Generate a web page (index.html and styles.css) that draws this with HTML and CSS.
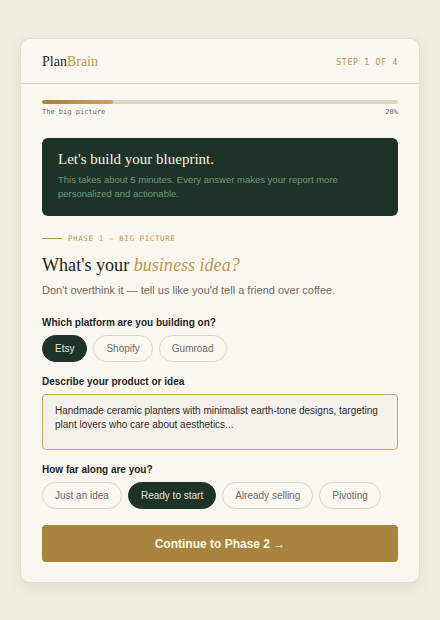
FILE: index.html
```html
<!DOCTYPE html>
<html lang="en">
<head>
<meta charset="utf-8">
<link rel="stylesheet" href="styles.css">
</head>
<body>
<div class="card">
  <header class="card-header">
    <div class="logo"><span class="logo-plan">Plan</span><span class="logo-brain">Brain</span></div>
    <div class="step">STEP 1 OF 4</div>
  </header>
  <div class="card-body">
    <div class="progress">
      <div class="track"><div class="fill" style="width:20%"></div></div>
      <div class="progress-labels"><span>The big picture</span><span>20%</span></div>
    </div>
    <div class="intro">
      <div class="intro-title">Let's build your blueprint.</div>
      <div class="intro-text">This takes about 5 minutes. Every answer makes your report more personalized and actionable.</div>
    </div>
    <div class="phase"><span class="phase-line"></span><span>PHASE 1 — BIG PICTURE</span></div>
    <h1 class="question">What's your <em>business idea?</em></h1>
    <p class="sub">Don't overthink it — tell us like you'd tell a friend over coffee.</p>
    <div class="field">
      <div class="label">Which platform are you building on?</div>
      <div class="pills">
        <span class="pill active">Etsy</span>
        <span class="pill">Shopify</span>
        <span class="pill">Gumroad</span>
      </div>
    </div>
    <div class="field">
      <div class="label">Describe your product or idea</div>
      <div class="textarea">Handmade ceramic planters with minimalist earth-tone designs, targeting plant lovers who care about aesthetics...</div>
    </div>
    <div class="field">
      <div class="label">How far along are you?</div>
      <div class="pills">
        <span class="pill">Just an idea</span>
        <span class="pill active">Ready to start</span>
        <span class="pill">Already selling</span>
        <span class="pill">Pivoting</span>
      </div>
    </div>
    <button class="continue">Continue to Phase 2 →</button>
  </div>
</div>
</body>
</html>
```
FILE: styles.css
```css
* { box-sizing: border-box; }
html, body { margin: 0; padding: 0; }
body {
  background: #f2ede3;
  font-family: "Liberation Sans", Arial, sans-serif;
  padding: 38px 20px;
  min-height: 620px;
}
.card {
  width: 400px;
  background: #faf7f1;
  border: 1px solid #e3ddd0;
  border-radius: 10px;
  box-shadow: 0 4px 14px rgba(60, 50, 30, 0.10);
  overflow: hidden;
}
.card-header {
  height: 45px;
  display: flex;
  align-items: center;
  justify-content: space-between;
  padding: 0 21px;
  border-bottom: 1px solid #ddd6c7;
}
.logo {
  font-family: "Liberation Serif", "Times New Roman", serif;
  font-size: 14px;
  padding-top: 2px;
}
.logo-plan { color: #1c2a24; }
.logo-brain { color: #c0964e; }
.step {
  font-family: "DejaVu Sans Mono", monospace;
  font-size: 8px;
  letter-spacing: 0.1em;
  color: #b58e4c;
  padding-top: 2px;
}
.card-body {
  padding: 16px 21px 20px;
}
.track {
  height: 4px;
  border-radius: 2px;
  background: #ddd4c2;
  overflow: hidden;
}
.fill {
  height: 100%;
  border-radius: 2px;
  background: linear-gradient(90deg, #a88239, #c9a366);
}
.progress-labels {
  display: flex;
  justify-content: space-between;
  font-family: "DejaVu Sans Mono", monospace;
  font-size: 7px;
  color: #6c6a62;
  margin-top: 4px;
}
.intro {
  margin-top: 22px;
  background: #1e3328;
  border-radius: 6px;
  padding: 13px 16px 15px;
}
.intro-title {
  font-family: "Liberation Serif", "Times New Roman", serif;
  font-size: 15px;
  color: #f6f1e6;
}
.intro-text {
  margin-top: 5px;
  font-size: 9.5px;
  line-height: 14px;
  color: #6b9a78;
}
.phase {
  margin-top: 18px;
  display: flex;
  align-items: center;
  gap: 6px;
  font-family: "DejaVu Sans Mono", monospace;
  font-size: 7.5px;
  letter-spacing: 0.08em;
  color: #c0964e;
}
.phase-line {
  width: 20px;
  height: 1px;
  background: #b58e4c;
}
.question {
  margin: 12px 0 0;
  font-family: "Liberation Serif", "Times New Roman", serif;
  font-weight: normal;
  font-size: 18.1px;
  color: #1c2420;
}
.question em { color: #c0964e; }
.sub {
  margin: 8px 0 0;
  font-size: 11px;
  color: #6d6a64;
}
.field { margin-top: 21px; }
.field + .field { margin-top: 14px; }
.label {
  font-size: 10px;
  font-weight: bold;
  color: #1b1f1d;
  margin-bottom: 7px;
}
.pills {
  display: flex;
  gap: 6px;
}
.pill {
  height: 27px;
  display: inline-flex;
  align-items: center;
  padding: 0 12px;
  border: 1px solid #ddd3c1;
  border-radius: 14px;
  font-size: 10px;
  color: #6d6a64;
  background: #faf7f1;
}
.pill.active {
  background: #1e3328;
  border-color: #1e3328;
  color: #e8e6de;
}
.textarea {
  height: 56px;
  border: 1px solid #caa463;
  border-radius: 4px;
  background: #f6f1ea;
  padding: 9px 12px;
  font-size: 10px;
  line-height: 14px;
  color: #2b2b2b;
}
.continue {
  display: block;
  width: 100%;
  margin-top: 16px;
  height: 37px;
  border: none;
  border-radius: 4px;
  background: #a8843e;
  color: #fbf6ea;
  font-family: "Liberation Sans", Arial, sans-serif;
  font-weight: bold;
  font-size: 12px;
}
```
